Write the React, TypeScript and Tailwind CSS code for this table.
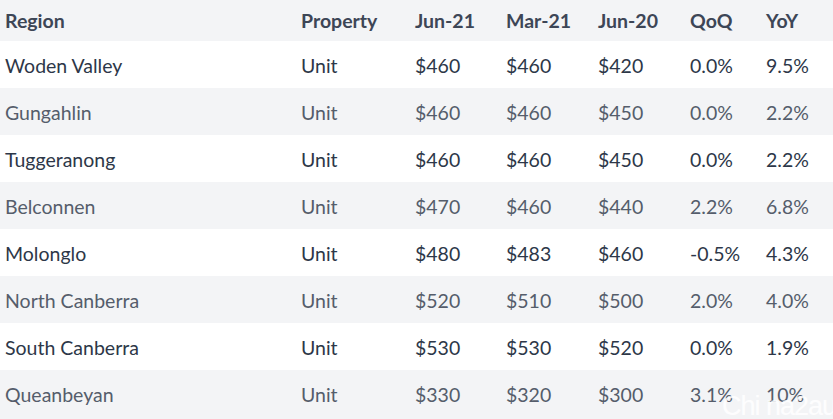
const rows = [
  ["Woden Valley", "Unit", "$460", "$460", "$420", "0.0%", "9.5%"],
  ["Gungahlin", "Unit", "$460", "$460", "$450", "0.0%", "2.2%"],
  ["Tuggeranong", "Unit", "$460", "$460", "$450", "0.0%", "2.2%"],
  ["Belconnen", "Unit", "$470", "$460", "$440", "2.2%", "6.8%"],
  ["Molonglo", "Unit", "$480", "$483", "$460", "-0.5%", "4.3%"],
  ["North Canberra", "Unit", "$520", "$510", "$500", "2.0%", "4.0%"],
  ["South Canberra", "Unit", "$530", "$530", "$520", "0.0%", "1.9%"],
  ["Queanbeyan", "Unit", "$330", "$320", "$300", "3.1%", "10%"],
];

const headers = ["Region", "Property", "Jun-21", "Mar-21", "Jun-20", "QoQ", "YoY"];
const widths = [296, 114, 91, 92, 92, 76, 72];

export default function App() {
  return (
    <div className="relative w-[833px] h-[419px] overflow-hidden bg-[#f3f4f6] font-['Lato',sans-serif]">
      <table className="w-[833px] border-collapse table-fixed text-[19.5px]">
        <colgroup>
          {widths.map((w, i) => (
            <col key={i} style={{ width: w }} />
          ))}
        </colgroup>
        <thead>
          <tr className="h-[41px] bg-[#f3f4f6]">
            {headers.map((h) => (
              <th key={h} className="px-[5px] pt-[1px] text-left font-bold text-[#3d4656]">
                {h}
              </th>
            ))}
          </tr>
        </thead>
        <tbody>
          {rows.map((r, i) => (
            <tr
              key={r[0]}
              className={
                i % 2 === 0
                  ? "h-[47px] bg-white text-[#2d3748]"
                  : "h-[47px] bg-[#f3f4f6] text-[#555d6b]"
              }
            >
              {r.map((c, j) => (
                <td key={j} className="px-[5px] pt-[2px] whitespace-nowrap">
                  {c}
                </td>
              ))}
            </tr>
          ))}
        </tbody>
      </table>
      <div className="absolute left-[722px] top-[393px] leading-none text-[27px] tracking-[-1px] text-white/85 font-['Liberation_Sans',sans-serif] whitespace-nowrap">
        Chi na2au
      </div>
    </div>
  );
}
